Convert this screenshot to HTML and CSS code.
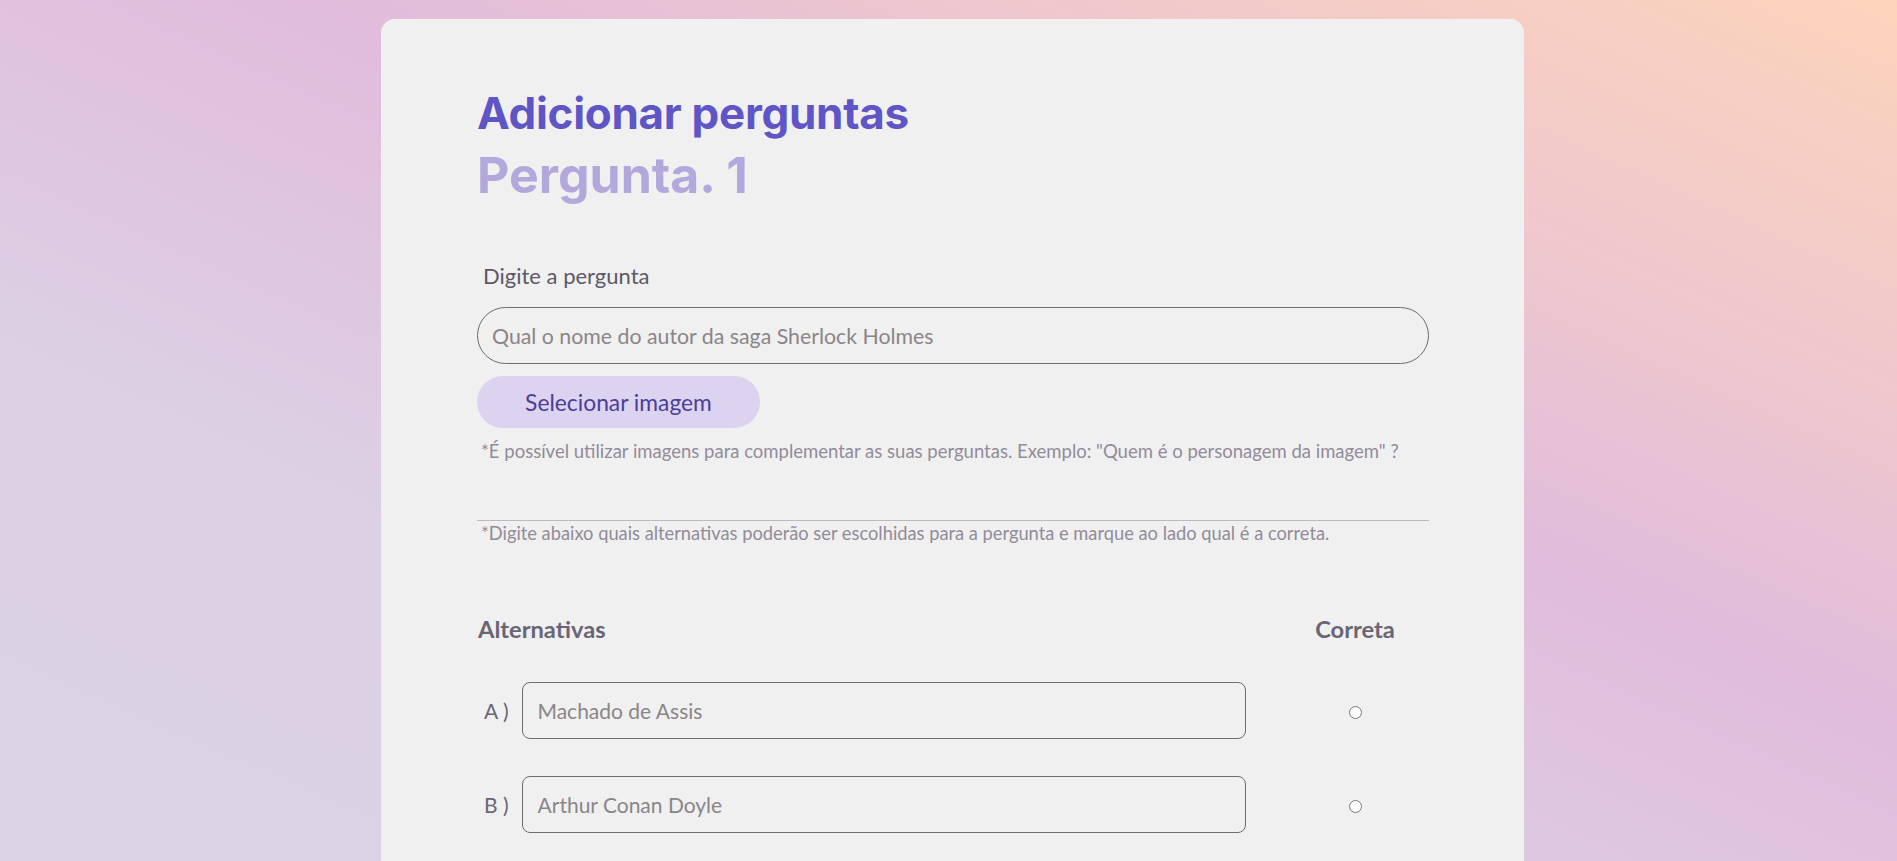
FILE: index.html
```html
<!DOCTYPE html>
<html lang="pt-BR">
<head>
<meta charset="utf-8">
<title>Adicionar perguntas</title>
<link rel="stylesheet" href="styles.css">
</head>
<body>
<main class="card">
  <h1 class="title">Adicionar perguntas</h1>
  <h2 class="subtitle">Pergunta. 1</h2>

  <label class="field-label" for="pergunta">Digite a pergunta</label>
  <input id="pergunta" class="question-input" type="text" placeholder="Qual o nome do autor da saga Sherlock Holmes">
  <button class="image-btn" type="button">Selecionar imagem</button>
  <p class="note">*É possível utilizar imagens para complementar as suas perguntas. Exemplo: "Quem é o personagem da imagem" ?</p>

  <hr class="divider">
  <p class="note note-tight">*Digite abaixo quais alternativas poderão ser escolhidas para a pergunta e marque ao lado qual é a correta.</p>

  <div class="alt-header">
    <span class="alt-title">Alternativas</span>
    <span class="alt-col">Correta</span>
  </div>

  <div class="alt-row">
    <div class="alt-left">
      <span class="alt-letter">A )</span>
      <input class="alt-input" type="text" placeholder="Machado de Assis">
    </div>
    <div class="alt-col"><input class="radio" type="radio" name="correta"></div>
  </div>

  <div class="alt-row">
    <div class="alt-left">
      <span class="alt-letter">B )</span>
      <input class="alt-input" type="text" placeholder="Arthur Conan Doyle">
    </div>
    <div class="alt-col"><input class="radio" type="radio" name="correta"></div>
  </div>
</main>
</body>
</html>
```

FILE: styles.css
```css
* { box-sizing: border-box; }

html, body { margin: 0; padding: 0; }

body {
  min-height: 100vh;
  font-family: "Lato", "Noto Sans", sans-serif;
  background: linear-gradient(to top right, #dbd3e6 0%, #dcd0e4 30%, #e1bcdc 58%, #f0c8cc 78%, #fdd4bb 100%);
  background-attachment: fixed;
  padding-top: 19px;
}

.card {
  width: 1143px;
  margin: 0 0 0 381px;
  background: #f0f0f0;
  border-radius: 14px;
  padding: 69px 95px 140px 96px;
  display: flex;
  flex-direction: column;
}

.title {
  margin: 0;
  font-family: "Inter", "Noto Sans", sans-serif;
  font-weight: 700;
  font-size: 44px;
  line-height: 50px;
  letter-spacing: -0.3px;
  color: #5f55c6;
}

.subtitle {
  margin: 9px 0 0;
  font-family: "Inter", "Noto Sans", sans-serif;
  font-weight: 700;
  font-size: 50px;
  line-height: 56px;
  color: #b2a8dc;
}

.field-label {
  margin: 61px 0 0 6px;
  font-size: 22px;
  line-height: 24px;
  color: #5d5868;
}

.question-input {
  margin-top: 19px;
  width: 100%;
  height: 57px;
  border: 1px solid #6f6c72;
  border-radius: 29px;
  background: transparent;
  padding: 0 14px;
  font-family: inherit;
  font-size: 21.3px;
  color: #555;
}

.question-input::placeholder,
.alt-input::placeholder { color: #8a8587; }

.image-btn {
  align-self: flex-start;
  margin-top: 12px;
  width: 283px;
  height: 52px;
  border: none;
  border-radius: 26px;
  background: #dcd3f1;
  color: #4b3e98;
  font-family: inherit;
  font-size: 22.8px;
  cursor: pointer;
}

.note {
  margin: 12px 0 0 4px;
  font-size: 18.5px;
  line-height: 22px;
  color: #928b9a;
}

.divider {
  margin: 58px 0 0;
  border: none;
  border-top: 1px solid #bdbabd;
  height: 0;
}

.note-tight { margin-top: 1px; font-size: 18.3px; }

.alt-header {
  margin-top: 71px;
  display: flex;
  justify-content: space-between;
  align-items: center;
  font-size: 23.7px;
  line-height: 28px;
  font-weight: 700;
  color: #6a6575;
}

.alt-title { padding-left: 1px; }

.alt-col {
  width: 148px;
  display: flex;
  justify-content: center;
  align-items: center;
}

.alt-row {
  margin-top: 37px;
  display: flex;
  justify-content: space-between;
  align-items: center;
}

.alt-header + .alt-row { margin-top: 39px; }

.alt-left {
  display: flex;
  align-items: center;
  gap: 13px;
  padding-left: 7px;
}

.alt-letter {
  font-size: 21px;
  color: #6a6575;
}

.alt-input {
  width: 724px;
  height: 57px;
  border: 1px solid #6f6c72;
  border-radius: 8px;
  background: transparent;
  padding: 0 15px;
  font-family: inherit;
  font-size: 21px;
  color: #555;
}

.radio {
  margin: 4px 0 0;
  width: 13px;
  height: 13px;
}
```
